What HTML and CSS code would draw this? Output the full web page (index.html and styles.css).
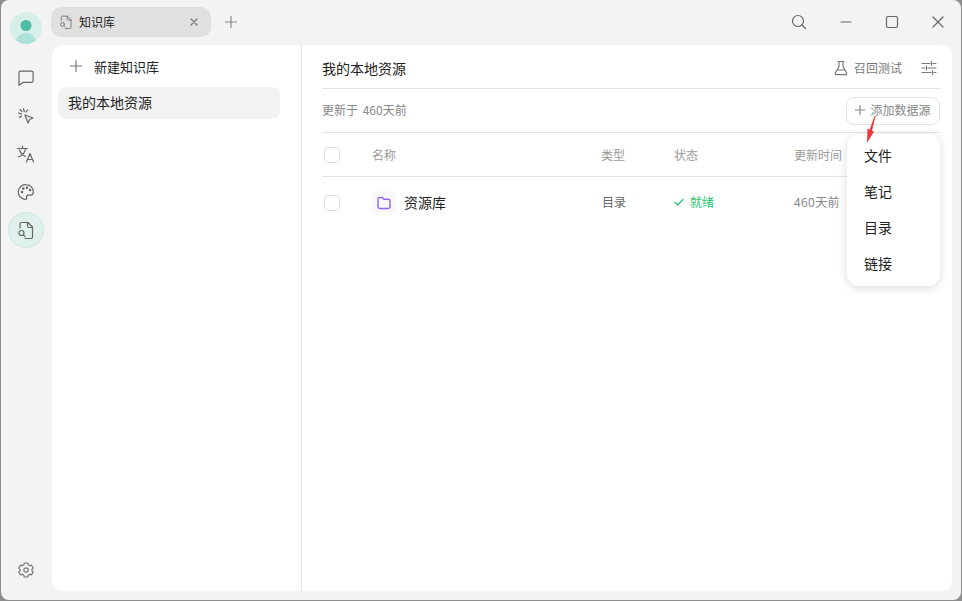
FILE: index.html
```html
<!DOCTYPE html>
<html lang="zh-CN">
<head>
  <meta charset="UTF-8" />
  <title>知识库</title>
  <link rel="stylesheet" href="styles.css">
</head>
<body>
  <div class="window">
    <div class="rail">
      <div class="avatar">
        <svg width="32" height="32" viewBox="0 0 32 32"><circle class="avatar-head" cx="16" cy="13.500" r="5.500"/><path class="avatar-body" d="M5.500 32a10.500 11 0 0 1 21 0z"/></svg>
      </div>
      <div class="rail-icons">
        <button class="rail-btn"><svg width="18" height="18" viewBox="0 0 18 18"><path d="M3.500 2.200h11a1.600 1.600 0 0 1 1.600 1.600v8a1.600 1.600 0 0 1-1.600 1.600H6L2 16.200V3.800a1.600 1.600 0 0 1 1.500-1.600z"/></svg></button>
        <button class="rail-btn"><svg width="18" height="18" viewBox="0 0 18 18"><path d="M8 8l8 3-3.300 1.500L11 16z"/><path d="M6.500 1.500l.8 3M1.500 6l3 .8M3 2.500l2 2M10.500 3l-1.500 2M2.500 10.500l2-1.500"/></svg></button>
        <button class="rail-btn"><svg width="20" height="20" viewBox="0 0 20 20"><path d="M1.500 4.500h10M6.500 2v2.500M9.500 5c-.6 3.500-3.500 6.500-7 8M3.500 6c.8 2.500 3 5 6 6.500"/><path d="M10.500 18l3.500-8.500 3.500 8.500M11.700 15.500h4.600"/></svg></button>
        <button class="rail-btn"><svg width="18" height="18" viewBox="0 0 18 18"><path d="M9 1.600a7.400 7.400 0 1 0-.8 14.800c1.300.1 1.900-.9 1.500-1.900-.5-1.200.1-2.400 1.600-2.400h2.300c1.500 0 2.700-1.100 2.700-3.200C16.300 4.600 13 1.600 9 1.600z"/><circle cx="5" cy="9" r=".7"/><circle cx="6.300" cy="5.600" r=".7"/><circle cx="10" cy="4.700" r=".7"/><circle cx="13" cy="7" r=".7"/></svg></button>
        <button class="rail-btn active"><svg width="18" height="18" viewBox="0 0 18 18"><path d="M3 7V3a1.500 1.500 0 0 1 1.500-1.500h6.500L15.500 6v10a1.500 1.500 0 0 1-1.500 1.500H8"/><path d="M10.500 1.500V5a1.500 1.500 0 0 0 1.500 1.500h3.500"/><circle cx="4.500" cy="12" r="2.500"/><path d="M6.300 13.800L8 15.500"/></svg></button>
      </div>
      <button class="rail-btn settings"><svg width="16" height="16" viewBox="0 0 16 16"><path d="M6.300 1h3.400l.5 1.800 1.500.9 1.800-.5 1.700 2.900-1.300 1.400v1l1.300 1.400-1.700 2.900-1.800-.5-1.500.9-.5 1.800H6.300l-.5-1.800-1.500-.9-1.800.5L.8 9.900 2.100 8.500v-1L.8 6.100l1.700-2.900 1.800.5 1.500-.9z"/><circle cx="8" cy="8" r="2.200"/></svg></button>
    </div>

    <div class="content">
      <div class="tabbar">
        <div class="tab">
          <svg class="tab-icon" width="14" height="14" viewBox="0 0 18 18"><path d="M3 7V3a1.500 1.500 0 0 1 1.500-1.500h6.500L15.500 6v10a1.500 1.500 0 0 1-1.500 1.500H8"/><path d="M10.500 1.500V5a1.500 1.500 0 0 0 1.500 1.500h3.500"/><circle cx="4.500" cy="12" r="2.500"/><path d="M6.300 13.800L8 15.500"/></svg>
          <span class="tab-title">知识库</span>
          <svg class="tab-close" width="8" height="8" viewBox="0 0 8 8"><path d="M1 1l6 6M7 1L1 7"/></svg>
        </div>
        <svg class="tab-add" width="14" height="14" viewBox="0 0 14 14"><path d="M7 1.500v11M1.500 7h11"/></svg>
        <div class="win-controls">
          <svg width="16" height="16" viewBox="0 0 16 16"><circle cx="7" cy="7" r="5.500"/><path d="M11 11l3.500 3.500"/></svg>
          <svg width="12" height="12" viewBox="0 0 12 12"><path d="M1 6h10"/></svg>
          <svg width="14" height="14" viewBox="0 0 14 14"><rect x="1.500" y="1.500" width="11" height="11" rx="1.500"/></svg>
          <svg class="win-close" width="14" height="14" viewBox="0 0 14 14"><path d="M2 2l10 10M12 2L2 12"/></svg>
        </div>
      </div>

      <div class="panel">
        <div class="library-list">
          <div class="new-library">
            <svg width="14" height="14" viewBox="0 0 14 14"><path d="M7 1.500v11M1.500 7h11"/></svg>
            <span>新建知识库</span>
          </div>
          <div class="library-item">我的本地资源</div>
        </div>

        <div class="library-main">
          <div class="main-head">
            <span class="main-title">我的本地资源</span>
            <div class="head-tools">
              <svg width="16" height="16" viewBox="0 0 16 16"><path d="M5 1.500h6M6 1.500v5L2.300 13a1.200 1.200 0 0 0 1 1.700h9.400a1.200 1.200 0 0 0 1-1.700L10 6.500v-5M4.500 10h7"/></svg>
              <span>召回测试</span>
              <svg class="tune" width="16" height="16" viewBox="0 0 16 16"><path d="M1 3.500h8M12 3.500h3M10.500 1.500v4M1 8h3M7 8h8M5.500 6v4M1 12.500h9M13 12.500h2M11.500 10.500v4"/></svg>
            </div>
          </div>

          <div class="main-sub">
            <span class="updated">更新于 460天前</span>
            <button class="add-source">
              <svg width="10" height="10" viewBox="0 0 10 10"><path d="M5 .5v9M.5 5h9"/></svg>
              添加数据源
            </button>
          </div>

          <div class="row row-head">
            <span class="check"></span>
            <span class="col-name">名称</span>
            <span class="col-type">类型</span>
            <span class="col-status">状态</span>
            <span class="col-time">更新时间</span>
          </div>
          <div class="row row-body">
            <span class="check"></span>
            <span class="col-name name-cell">
              <span class="folder"><svg width="16" height="16" viewBox="0 0 16 16"><path d="M2 4.200A1.700 1.700 0 0 1 3.700 2.500h2.600l1.500 1.800h4.500A1.700 1.700 0 0 1 14 6v5.800a1.700 1.700 0 0 1-1.700 1.700H3.700A1.700 1.700 0 0 1 2 11.800z"/></svg></span>
              <span class="name-text">资源库</span>
            </span>
            <span class="col-type cell-text">目录</span>
            <span class="col-status ready cell-text">
              <svg width="10" height="10" viewBox="0 0 10 10"><path d="M1 5.500l2.700 2.500L9 2.500"/></svg>
              就绪
            </span>
            <span class="col-time cell-text age">460天前</span>
          </div>

          <ul class="source-menu">
            <li>文件</li>
            <li>笔记</li>
            <li>目录</li>
            <li>链接</li>
          </ul>
          <svg class="red-arrow" width="14" height="30" viewBox="0 0 14 30"><path d="M10.500 0L7 15l2 .6L2 27 2.500 12.500l2.200.9L9.500 0z"/></svg>
        </div>
      </div>
    </div>
  </div>
</body>
</html>
```

FILE: styles.css
```css
* {
  box-sizing: border-box;
}

html, body {
  margin: 0;
  height: 100%;
}

body {
  background: #8d8d8d;
  padding: 0 1px 1px 1px;
  font-family: "Noto Sans CJK SC", "Noto Sans", sans-serif;
  color: #222;
  overflow: hidden;
}

svg {
  fill: none;
  stroke: currentColor;
  stroke-width: 1.2;
  stroke-linecap: round;
  stroke-linejoin: round;
  display: block;
}

button {
  border: none;
  background: none;
  padding: 0;
  font-family: inherit;
}

.window {
  height: 100%;
  display: flex;
  background: #f3f3f3;
  border-radius: 8px;
  overflow: hidden;
}

/* Left icon rail */
.rail {
  width: 51px;
  padding: 12px 0 12px 9px;
  display: flex;
  flex-direction: column;
}

.avatar {
  width: 32px;
  height: 32px;
  border-radius: 50%;
  background: #d6efe9;
  overflow: hidden;
}

.avatar svg {
  stroke: none;
}

.avatar-head {
  fill: #4dbba6;
}

.avatar-body {
  fill: #aee2d8;
}

.rail-icons {
  margin-top: 16px;
  display: flex;
  flex-direction: column;
  gap: 2px;
  flex: 1;
}

.rail-btn {
  width: 36px;
  height: 36px;
  margin-left: -2px;
  display: flex;
  align-items: center;
  justify-content: center;
  color: #666;
  border-radius: 50%;
}

.rail-btn.active {
  background: #dff1ec;
  border: 1px solid #cbe8e0;
}

.settings {
  height: 20px;
  margin-bottom: 8px;
  color: #777;
}

/* Tab bar */
.content {
  flex: 1;
  display: flex;
  flex-direction: column;
  min-width: 0;
}

.tabbar {
  height: 45px;
  padding-top: 7px;
  margin-left: -1px;
  display: flex;
  align-items: flex-start;
}

.tab {
  width: 160px;
  height: 30px;
  background: #e0e0e0;
  border-radius: 10px;
  display: flex;
  align-items: center;
  padding: 0 13px 2px 8px;
  font-size: 12px;
}

.tab-icon {
  color: #777;
  margin-top: 2px;
}

.tab-title {
  margin-left: 6px;
  flex: 1;
}

.tab-close {
  color: #777;
  margin-top: 2px;
}

.tab-add {
  margin: 8px 0 0 13px;
  color: #888;
}

.win-controls {
  margin-left: auto;
  padding-right: 16px;
  height: 30px;
  display: flex;
  align-items: center;
  gap: 33px;
  color: #666;
}

.win-close {
  margin-left: -1px;
}

/* Main white panel */
.panel {
  flex: 1;
  margin: 0 9px 9px 0;
  background: #fff;
  border-radius: 10px;
  display: flex;
  min-height: 0;
}

.library-list {
  width: 250px;
  border-right: 1px solid #e6e6e6;
  padding: 4px 21px 0 6px;
}

.new-library {
  height: 34px;
  display: flex;
  align-items: center;
  gap: 11px;
  padding-left: 11px;
  font-size: 13px;
}

.new-library svg {
  color: #777;
}

.library-item {
  height: 32px;
  margin-top: 4px;
  border-radius: 8px;
  background: #f2f2f2;
  padding: 0 0 2px 10px;
  font-size: 14px;
  line-height: 30px;
}

.library-main {
  flex: 1;
  position: relative;
  padding: 0 12px 0 20px;
}

.main-head {
  height: 44px;
  padding-top: 2px;
  display: flex;
  align-items: center;
  justify-content: space-between;
  border-bottom: 1px solid #e3e3e3;
}

.main-title {
  font-size: 14px;
}

.head-tools {
  display: flex;
  align-items: center;
  gap: 5px;
  font-size: 12px;
  color: #777;
}

.tune {
  margin-left: 14px;
  margin-right: 3px;
}

.main-sub {
  height: 44px;
  display: flex;
  align-items: center;
  justify-content: space-between;
  border-bottom: 1px solid #e3e3e3;
  font-size: 12px;
  color: #888;
}

.updated {
  word-spacing: 2px;
  margin-bottom: 2px;
}

.add-source {
  width: 94px;
  height: 28px;
  padding-bottom: 2px;
  border: 1px solid #e3e3e3;
  border-radius: 8px;
  font-size: 12px;
  color: #888;
  display: flex;
  align-items: center;
  justify-content: center;
  gap: 5px;
}

/* Table */
.row {
  display: flex;
  align-items: center;
  font-size: 12px;
}

.row-head {
  height: 44px;
  border-bottom: 1px solid #e3e3e3;
  color: #999;
}

.row-body {
  height: 52px;
  color: #666;
}

.check {
  width: 16px;
  height: 16px;
  margin-left: 2px;
  border: 1px solid #e0e0e0;
  border-radius: 4px;
}

.col-name {
  width: 229px;
  margin-left: 32px;
}

.col-type {
  width: 73px;
}

.row-body .col-type {
  padding-left: 1px;
}

.col-status {
  width: 120px;
}

.cell-text {
  margin-bottom: 3px;
}

.age {
  color: #888;
  letter-spacing: 0.4px;
}

.name-cell {
  display: flex;
  align-items: center;
  gap: 8px;
  font-size: 14px;
  color: #222;
}

.name-text {
  margin-bottom: 2px;
}

.folder {
  width: 24px;
  height: 24px;
  background: #f8f8f8;
  border-radius: 6px;
  display: flex;
  align-items: center;
  justify-content: center;
  color: #8f6bf0;
}

.folder svg {
  stroke-width: 1.5;
}

.ready {
  display: flex;
  align-items: center;
  gap: 6px;
  color: #1fc46e;
}

/* Dropdown over the table */
.source-menu {
  position: absolute;
  top: 89px;
  right: 12px;
  width: 93px;
  height: 152px;
  margin: 0;
  padding: 3px 0;
  list-style: none;
  background: #fff;
  border-radius: 12px;
  box-shadow: 0 2px 10px rgba(0, 0, 0, 0.14);
  font-size: 14px;
}

.source-menu li {
  height: 36px;
  line-height: 36px;
  padding-left: 17px;
}

.red-arrow {
  position: absolute;
  top: 71px;
  left: 563px;
  fill: #f0343c;
  stroke: none;
}
```
